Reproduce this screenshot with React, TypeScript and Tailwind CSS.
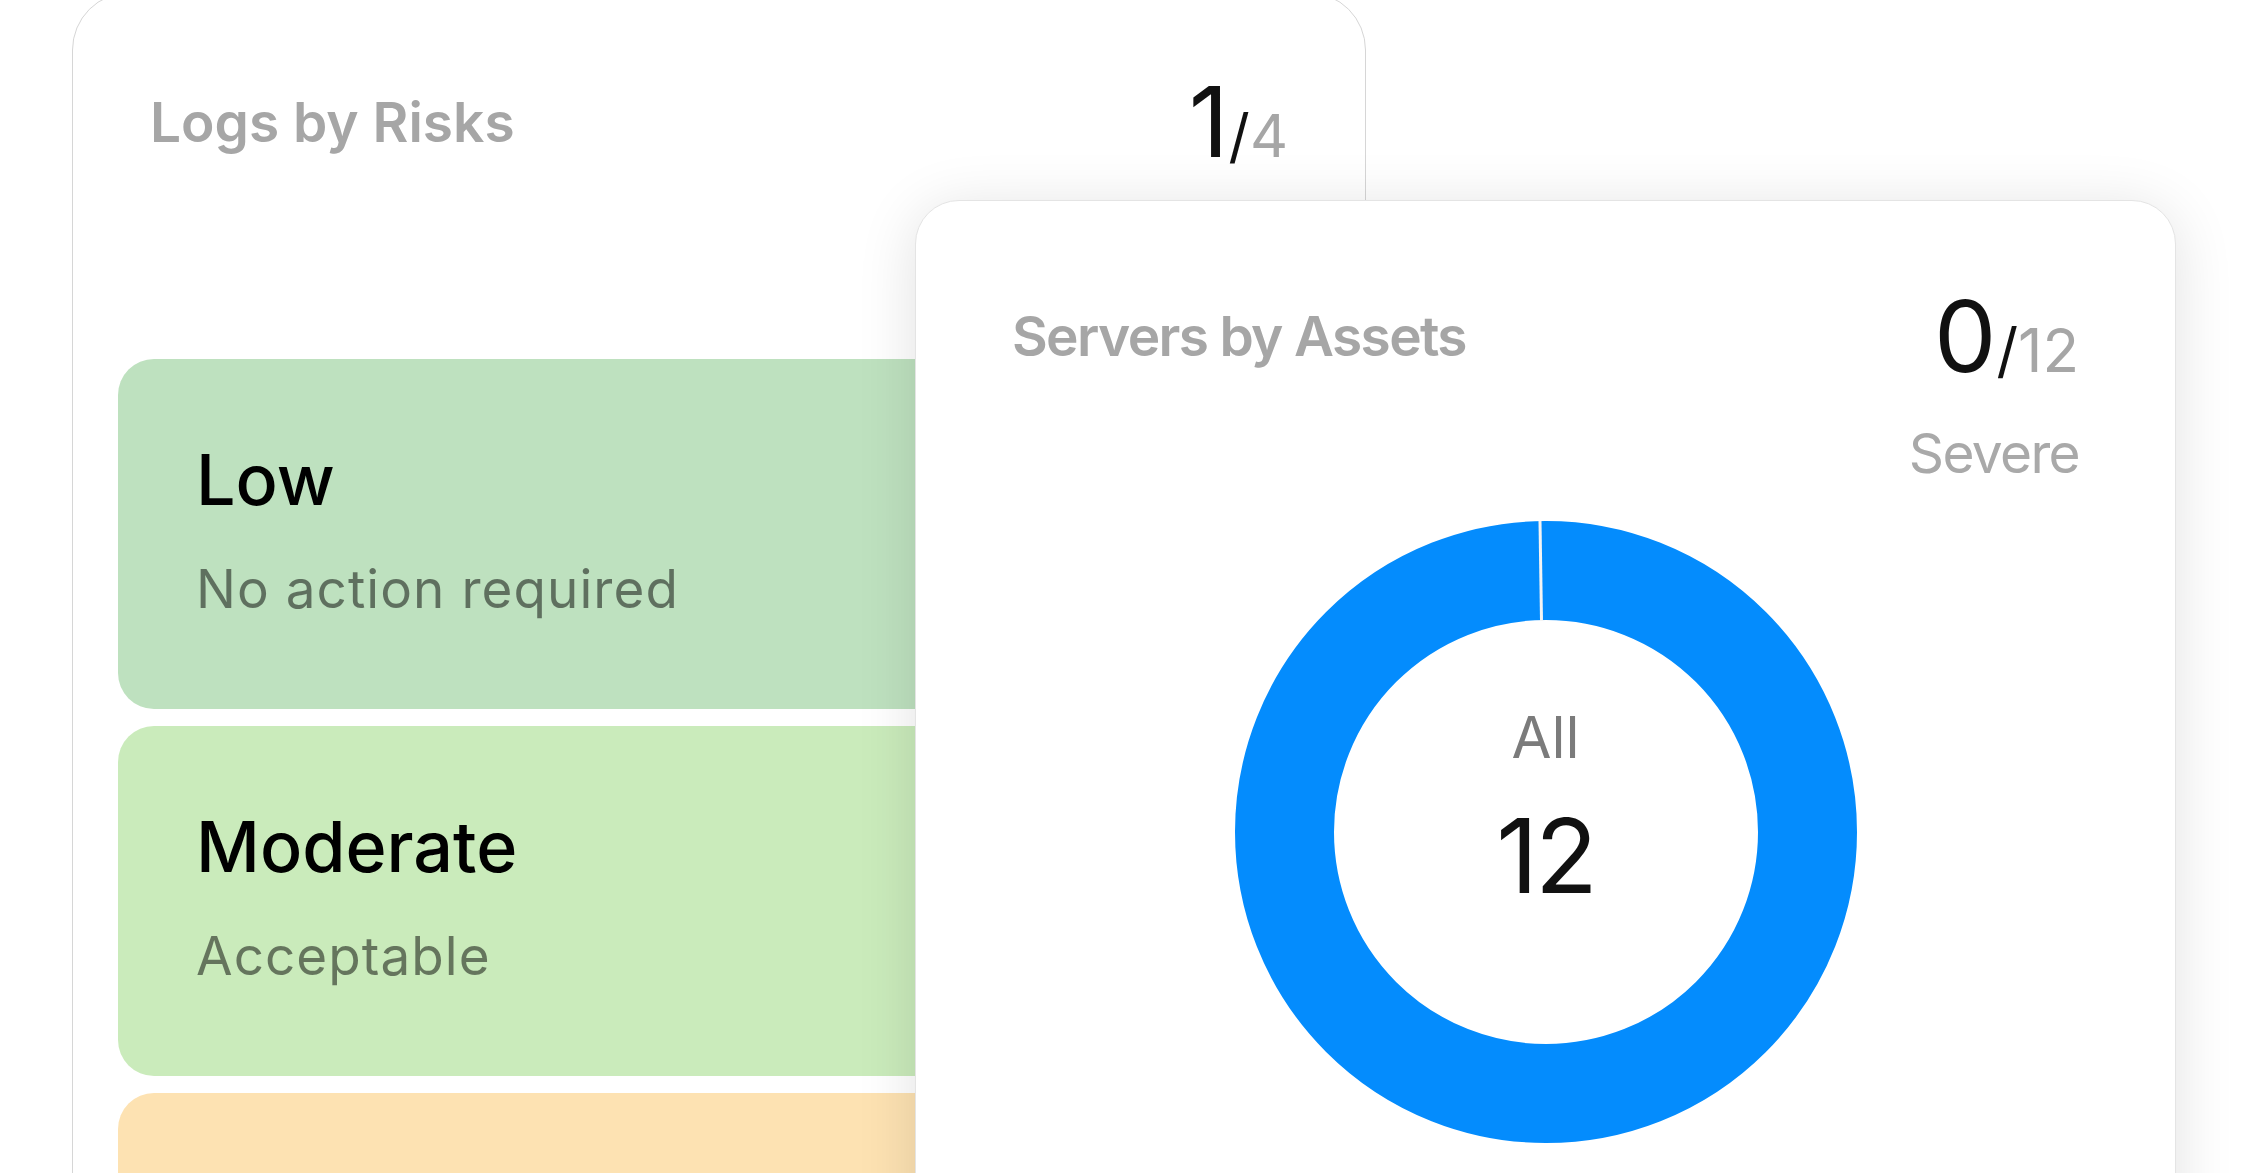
import React from 'react';

interface RiskItem {
  title?: string;
  note?: string;
  tone: string;
}

// the third card only peeks in at the bottom, its text is out of frame
const risks: RiskItem[] = [
  { title: 'Low', note: 'No action required', tone: 'bg-[#bee1bf]' },
  { title: 'Moderate', note: 'Acceptable', tone: 'bg-[#caebbb]' },
  { tone: 'bg-[#fde2b2]' },
];

const Donut: React.FC = () => {
  return (
    <div className="relative mx-auto h-[622px] w-[622px]">
      <svg width="622" height="622" viewBox="0 0 622 622">
        <circle cx="311" cy="311" r="261.5" fill="none" stroke="#048cfd" strokeWidth="99" />
        <line x1="306.5" y1="100" x2="305" y2="0" stroke="#f4f4f4" strokeWidth="3" />
      </svg>
      <div className="absolute inset-0 flex flex-col items-center pt-[187px]">
        <span className="text-[58px] leading-none text-[#7b7b7b]">All</span>
        <span className="mt-[38px] text-[103px] leading-none tracking-[-0.03em] text-[#111]">12</span>
      </div>
    </div>
  );
};

const App: React.FC = () => {
  return (
    <div className="relative h-[1173px] w-full overflow-hidden bg-white font-['Inter',sans-serif]">
      {/* back card */}
      <section className="-mt-[8px] ml-[72px] h-[1300px] w-[1294px] rounded-[58px] border border-[#d6d6d6] bg-white px-[45px]">
        <div className="flex items-center justify-between px-[32px] pt-[80px]">
          <h2 className="text-[55px] font-semibold leading-none text-[#a6a6a6]">Logs by Risks</h2>
          <div className="text-[98px] leading-none text-[#111]">
            1<span className="text-[59px]">/<span className="text-[#a6a6a6]">4</span></span>
          </div>
        </div>

        <div className="mt-[188px] flex flex-col gap-[17px]">
          {risks.map((risk, index) => (
            <div key={index} className={`h-[350px] rounded-[36px] pl-[78px] pt-[86px] ${risk.tone}`}>
              {risk.title && <div className="text-[70px] font-medium leading-none text-black">{risk.title}</div>}
              {risk.note && (
                <div className="mt-[48px] text-[53px] leading-none tracking-[0.02em] text-black/50">{risk.note}</div>
              )}
            </div>
          ))}
        </div>
      </section>

      {/* front card */}
      <section className="absolute left-[915px] top-[200px] h-[1100px] w-[1261px] rounded-[44px] border border-[#e4e4e4] bg-white px-[96px] pt-[86px] shadow-[0_8px_60px_rgba(0,0,0,0.12)]">
        <div className="flex items-center justify-between">
          <h2 className="text-[55px] font-semibold leading-none tracking-[-0.03em] text-[#a6a6a6]">Servers by Assets</h2>
          <div className="text-[99px] leading-none text-[#111]">
            0<span className="text-[60px]">/<span className="text-[#a6a6a6]">12</span></span>
          </div>
        </div>
        <div className="mt-[40px] text-right text-[55px] leading-none tracking-[-0.03em] text-[#a9a9a9]">Severe</div>
        <div className="mt-[40px]">
          <Donut />
        </div>
      </section>
    </div>
  );
};

export default App;
